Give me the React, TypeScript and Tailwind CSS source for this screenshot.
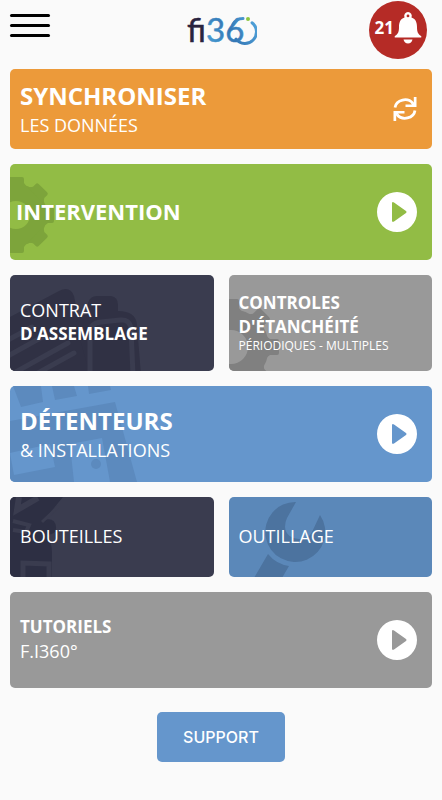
import type { ReactNode } from "react";

function Gear({ cx, cy, r, body, hole, fill, inner }: { cx: number; cy: number; r: number; body: number; hole: number; fill: string; inner: string }) {
  return (
    <svg className="absolute inset-0 h-full w-full" aria-hidden="true">
      <g transform={`translate(${cx} ${cy})`} fill={fill}>
        <circle r={body} />
        {[0, 45, 90, 135, 180, 225, 270, 315].map((a) => (
          <path key={a} transform={`rotate(${a})`} d={`M-11 ${-body + 3} L-8 ${-body - 1} V${-r + 2} Q-8 ${-r} -6 ${-r} H6 Q8 ${-r} 8 ${-r + 2} V${-body - 1} L11 ${-body + 3}Z`} />
        ))}
        <circle r={hole} fill={inner} />
      </g>
    </svg>
  );
}

function Documents() {
  return (
    <svg className="absolute inset-0 h-full w-full" aria-hidden="true">
      <path d="M0 42 L49 16 Q60 10 64 21 L80 100 H0Z" fill="#303144" />
      <g stroke="#3a3c4f" strokeWidth="5" strokeLinecap="round">
        <path d="M-2 65 L22 52M-2 81 L34 61M4 98 L58 68M28 98 L64 78" />
      </g>
      <path d="M66 50 Q66 41 78 39 V28 Q80 21 87 21 H101 Q108 22 108 30 V36 Q126 36 127 50 L131 100 H80Z" fill="#303144" />
      <path d="M80 100 V58 Q80 48 91 47 L110 45 Q120 44 121 54 L123 100" fill="none" stroke="#3a3c4f" strokeWidth="5" />
    </svg>
  );
}

function Building() {
  return (
    <svg className="absolute inset-0 h-full w-full" aria-hidden="true">
      <g fill="#5c8abe">
        <path d="M3 0 H31 L33 16 L11 21Z" />
        <path d="M42 0 H64 L67 10 L45 14Z" />
        <path d="M78 0 H100 L101 4 L79 8Z" />
        <path d="M0 35 L105 16 L127 96 H0Z" />
      </g>
      <g fill="#6596cc">
        <path d="M0 67 L40 58 L45 81 L4 89Z" />
        <path d="M60 58 L92 52 L100 96 H64Z" />
      </g>
      <circle cx="86" cy="78" r="5" fill="#5c8abe" />
    </svg>
  );
}

function Bottles() {
  return (
    <svg className="absolute inset-0 h-full w-full" aria-hidden="true">
      <path d="M0 0 H53 L34 23 Q45 20 46 30 Q47 37 37 38 Q42 46 42 56 V80 H0Z" fill="#2d2f43" />
      <g fill="none" stroke="#3a3c4f">
        <path d="M9 0 L7 13 L28 1" strokeWidth="6" />
        <path d="M49 9 L32 25" strokeWidth="3" />
        <path d="M3 24 L19 28 L16 35 L3 33" strokeWidth="4" />
        <path d="M13 80 V66 L39 67 V80" strokeWidth="5" />
      </g>
    </svg>
  );
}

function Wrench() {
  return (
    <svg className="absolute inset-0 h-full w-full" aria-hidden="true">
      <path d="M67 5 A30 30 0 1 0 91 18 L83 35 Q80 42 70 42 Q57 41 56 30 Q56 25 58 21Z" fill="#4c739f" />
      <path d="M39 57 Q47 67 60 69 L53 81 H25Z" fill="#4c739f" />
    </svg>
  );
}

function PlayIcon() {
  return (
    <svg className="h-10 w-10 shrink-0" viewBox="0 0 40 40" aria-hidden="true">
      <path fillRule="evenodd" fill="white" d="M20 0a20 20 0 1 0 0 40a20 20 0 1 0 0-40ZM17 10.4 29 19q1.200 1 0 2L17 29.600q-2 1-2-1V11.400q0-2 2-1Z" />
    </svg>
  );
}

function RefreshIcon() {
  return (
    <svg className="h-6 w-6 shrink-0" viewBox="0 0 24 24" aria-hidden="true">
      <g fill="none" stroke="white" strokeWidth="2.800">
        <path d="M2 10.500A10 9 0 0 1 20 6.500" />
        <path d="M22 13.500A10 9 0 0 1 4 17.500" />
      </g>
      <path d="M23.500 0V10H12.500V7.500H18.500L20.800 5.500V0Z" fill="white" />
      <path d="M0.500 24V14H11.500V16.500H5.500L3.200 18.500V24Z" fill="white" />
    </svg>
  );
}

function Logo() {
  return (
    <svg className="h-12 w-[72px]" viewBox="0 0 72 48" role="img" aria-label="fi360">
      <defs>
        <linearGradient id="blue" gradientUnits="userSpaceOnUse" x1="18" y1="42" x2="70" y2="14">
          <stop offset="0" stopColor="#4ba3d8" />
          <stop offset="0.5" stopColor="#3477b5" />
          <stop offset="1" stopColor="#52a5dc" />
        </linearGradient>
      </defs>
      <text x="2" y="41" fill="#29243f" stroke="#29243f" strokeWidth="0.5" fontSize="33" className="font-['Lato',sans-serif]">fi</text>
      <text x="21" y="41" fill="url(#blue)" stroke="url(#blue)" strokeWidth="0.5" fontSize="33" className="font-['Lato',sans-serif]">36</text>
      <path d="M48 22.300 A11.500 11.500 0 0 1 58 16.500M67 20.800 A11.500 11.500 0 1 1 51 37.100" transform="translate(0 1)" fill="none" stroke="url(#blue)" strokeWidth="3" strokeLinecap="round" />
      <circle cx="63" cy="18" r="2" fill="#8cc63f" />
    </svg>
  );
}

function BellIcon() {
  return (
    <svg className="h-8 w-7" viewBox="0 0 28 32" fill="white" aria-hidden="true">
      <path fillRule="evenodd" d="M14 0a4 4 0 0 1 3.500 5.500C22 7 23 11 23 15c0 5 1 7 4 9q1 1 0 1.500H1Q0 25 1 24c3-2 4-4 4-9 0-4 1-8 5.500-9.500A4 4 0 0 1 14 0Zm0 2.500a1.400 1.400 0 1 0 0 2.800a1.400 1.400 0 1 0 0-2.800Z" />
      <path d="M9.500 27.500H18.500Q17.500 31.500 14 31.500T9.500 27.500Z" />
    </svg>
  );
}

function Card({ className, art, icon, children }: { className: string; art?: ReactNode; icon?: ReactNode; children: ReactNode }) {
  return (
    <button type="button" className={`relative flex w-full items-center justify-between overflow-hidden rounded-[5px] pr-[15px] text-left text-white ${className}`}>
      {art}
      <span className="relative flex flex-col pb-[2px]">{children}</span>
      {icon}
    </button>
  );
}

const title = "text-2xl leading-[34px] font-bold";
const strong = "text-[17px] leading-6 font-bold";
const light = "text-lg leading-6";

export default function App() {
  return (
    <div className="min-h-screen bg-[#fafafa] pb-10 font-['Open_Sans',sans-serif]">
      <header className="grid grid-cols-3 items-start px-[10px] pt-px">
        <button type="button" aria-label="Menu" className="mt-[13px] flex w-10 flex-col gap-[7px]">
          <span className="h-[3px] w-full rounded-full bg-black" />
          <span className="h-[3px] w-full rounded-full bg-black" />
          <span className="h-[3px] w-full rounded-full bg-black" />
        </button>
        <div className="flex justify-center">
          <Logo />
        </div>
        <button type="button" aria-label="21 notifications" className="mr-[5px] flex h-[58px] w-[58px] items-center justify-end justify-self-end rounded-full bg-[#b52b26] pr-[5px] pb-1 text-white">
          <span className="text-[17px] leading-6 font-bold">21</span>
          <BellIcon />
        </button>
      </header>

      <main className="flex flex-col gap-[15px] px-[10px] pt-[10px]">
        <Card className="h-20 bg-[#ec9a3a] pl-[10px]" icon={<RefreshIcon />}>
          <span className={title}>SYNCHRONISER</span>
          <span className={light}>LES DONNÉES</span>
        </Card>
        <Card className="h-24 bg-[#92bc45] pl-[6px]" art={<Gear cx={6} cy={51} r={38} body={31} hole={14} fill="#7da43b" inner="#92bc45" />} icon={<PlayIcon />}>
          <span className="text-[22px] leading-[34px] font-bold">INTERVENTION</span>
        </Card>
        <div className="grid grid-cols-2 gap-[15px]">
          <Card className="h-24 bg-[#3a3c4f] pl-[10px]" art={<Documents />}>
            <span className={light}>CONTRAT</span>
            <span className={strong}>D'ASSEMBLAGE</span>
          </Card>
          <Card className="h-24 bg-[#999999] pl-[10px]" art={<Gear cx={2} cy={72} r={48} body={38} hole={17} fill="#808080" inner="#999999" />}>
            <span className={strong}>CONTROLES</span>
            <span className={strong}>D'ÉTANCHÉITÉ</span>
            <span className="text-xs leading-[14px] whitespace-nowrap">PÉRIODIQUES - MULTIPLES</span>
          </Card>
        </div>
        <Card className="h-24 bg-[#6596cc] pl-[10px]" art={<Building />} icon={<PlayIcon />}>
          <span className={title}>DÉTENTEURS</span>
          <span className={light}>&amp; INSTALLATIONS</span>
        </Card>
        <div className="grid grid-cols-2 gap-[15px]">
          <Card className="h-20 bg-[#3a3c4f] pl-[10px]" art={<Bottles />}>
            <span className={light}>BOUTEILLES</span>
          </Card>
          <Card className="h-20 bg-[#5b88b9] pl-[10px]" art={<Wrench />}>
            <span className={light}>OUTILLAGE</span>
          </Card>
        </div>
        <Card className="h-24 bg-[#999999] pl-[10px]" icon={<PlayIcon />}>
          <span className={strong}>TUTORIELS</span>
          <span className={light}>F.I360°</span>
        </Card>
      </main>

      <div className="mt-6 flex justify-center">
        <button type="button" className="h-[50px] w-32 rounded-[5px] bg-[#6596cc] font-['Inter',sans-serif] text-base font-medium text-white">
          SUPPORT
        </button>
      </div>
    </div>
  );
}
